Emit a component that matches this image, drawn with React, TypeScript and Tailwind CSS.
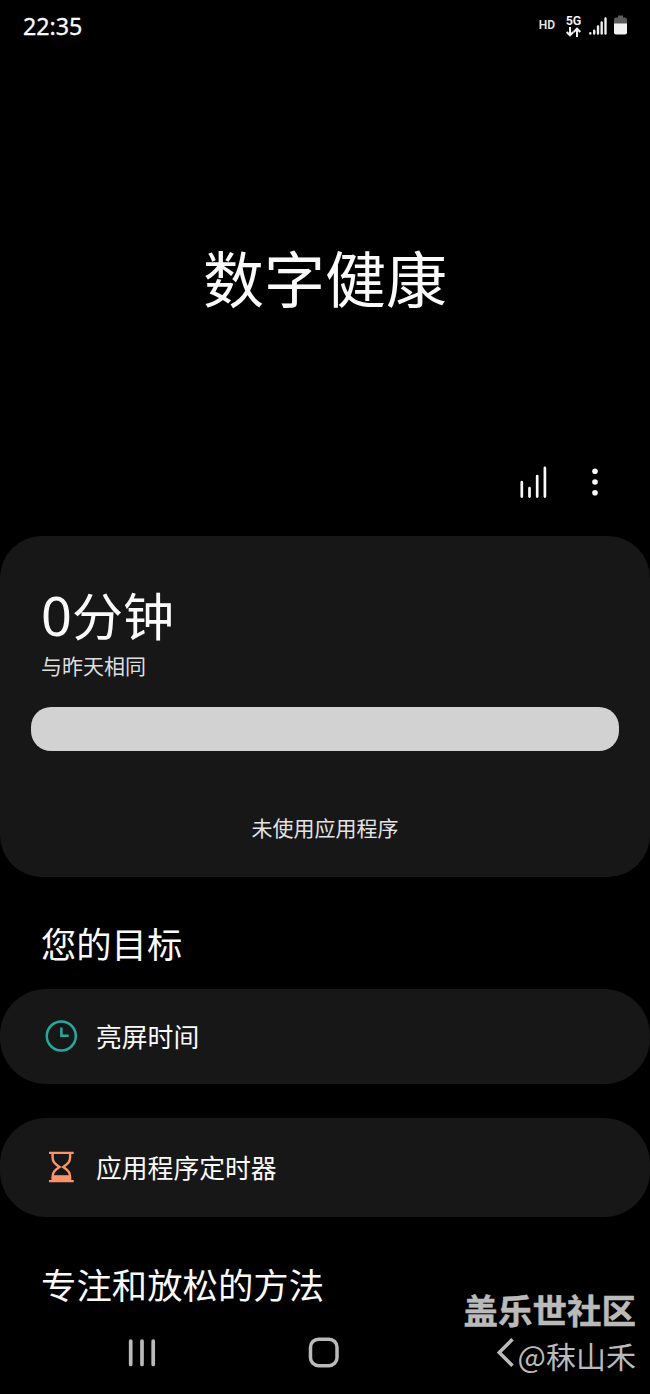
import type { ReactNode } from "react";

function StatusBar() {
  return (
    <header className="flex h-[52px] shrink-0 items-center justify-between pl-[23px] pr-[23px]">
      <span className="font-['Noto_Sans'] text-[23.200px] leading-[52px] font-normal [-webkit-text-stroke:0.3px_#fafafa]">22:35</span>
      <div className="flex h-[52px] items-center">
        <span className="mr-[10px] font-['Roboto'] text-[12px] leading-[12px] mb-[3px] font-semibold text-neutral-200">HD</span>
        <div className="mr-[7px] mb-px flex w-[17px] flex-col items-center">
          <span className="font-['Roboto'] text-[12.500px] leading-[11px] font-semibold">5G</span>
          <svg className="mt-px h-[10px] w-[15px]" viewBox="0 0 15 10" fill="none" stroke="#f2f2f2" strokeWidth="2">
            <path d="M4 0v8M.7 5 4 8.300l3.300-3.300M11 10V2M7.700 5 11 1.700l3.300 3.300" />
          </svg>
        </div>
        <svg className="mr-[7px] h-[18px] w-[18px]" viewBox="0 0 18 18" stroke="#eee" strokeWidth="2.400" strokeLinecap="round">
          <path d="M1.300 16.500v-.4M5.200 16.500v-2.700M9 16.500V9.500M12.700 16.500V5.500M16.500 16.500V1.500" />
        </svg>
        <svg className="mb-[3px] h-[20px] w-[13px]" viewBox="0 0 13 20">
          <path d="M4 .5h5v2h2a2 2 0 0 1 2 2V9H0V4.500a2 2 0 0 1 2-2h2z" fill="#5b5b5b" />
          <path d="M0 8.500h13v9a2 2 0 0 1-2 2H2a2 2 0 0 1-2-2z" fill="#f2f2f2" />
        </svg>
      </div>
    </header>
  );
}

function Toolbar() {
  return (
    <div className="flex h-[34px] shrink-0 items-center justify-end pr-[50px]">
      <svg className="mr-[42px] h-[32px] w-[28px]" viewBox="0 0 28 32" stroke="#fafafa" strokeWidth="2.700" strokeLinecap="round">
        <path d="M1.800 16.200v14.400M9.500 22.200v8.400M17.200 10v20.600M24.900 1.900v28.700" />
      </svg>
      <svg className="h-[30px] w-[10px]" viewBox="0 0 10 30" fill="#fafafa">
        <circle cx="5" cy="4.200" r="2.800" />
        <circle cx="5" cy="15" r="2.800" />
        <circle cx="5" cy="25.700" r="2.800" />
      </svg>
    </div>
  );
}

function UsageCard() {
  return (
    <section className="flex h-[341px] shrink-0 flex-col rounded-[42px] bg-[#171717]">
      <h2 className="mt-[48px] ml-[40px] flex h-[60px] items-baseline text-[51px] leading-[60px]">
        <span className="w-[32px] pl-px font-['Noto_Sans'] text-[54px] leading-[40px]">0</span>
        <span>分钟</span>
      </h2>
      <p className="mt-[6px] ml-[41px] text-[21px] leading-[30px] text-[#dedede]">与昨天相同</p>
      <div className="mx-[31px] mt-[27px] h-[44px] rounded-[20px] bg-[#d2d2d2]" />
      <p className="mt-[61px] text-center text-[21px] leading-[30px] text-[#e4e4e4]">未使用应用程序</p>
    </section>
  );
}

function ClockIcon() {
  return (
    <svg className="h-[32px] w-[32px]" viewBox="0 0 32 32" fill="none" stroke="#28a79d" strokeWidth="2.500">
      <circle cx="16.300" cy="16" r="14.500" />
      <path d="M16.400 7.500v8.300h7.300" />
    </svg>
  );
}

function HourglassIcon() {
  return (
    <svg className="h-[32px] w-[32px]" viewBox="0 0 32 32" fill="none" stroke="#fb9468" strokeWidth="2.400">
      <path d="M4 1.900h24.700M4 30.100h24.700" />
      <path d="M7.600 2v4.500c0 4.500 2.500 6.500 6.900 9.500-4.400 3-6.900 5-6.900 9.500V30M25.100 2v4.500c0 4.500-2.500 6.500-6.900 9.500 4.400 3 6.900 5 6.900 9.500V30" />
      <path d="M7.500 24.200h17.700V30H7.500z" fill="#fb9468" stroke="none" />
    </svg>
  );
}

function GoalRow({ icon, label, size }: { icon: ReactNode; label: string; size: string }) {
  return (
    <div className={`flex shrink-0 items-center bg-[#171717] pb-[2px] pl-[45px] ${size}`}>
      {icon}
      <span className="ml-[19px] text-[25.800px] leading-[36px] text-neutral-50">{label}</span>
    </div>
  );
}

function NavigationBar() {
  return (
    <nav className="flex h-[32px] shrink-0 items-center pl-[128px]">
      <svg className="h-[30px] w-[28px]" viewBox="0 0 28 30" stroke="#bababa" strokeWidth="3.700" strokeLinecap="round">
        <path d="M2.700 3v23.500M14 3v23.500M25.200 3v23.500" />
      </svg>
      <svg className="ml-[152px] h-[32px] w-[32px]" viewBox="0 0 32 32" fill="none" stroke="#bababa" strokeWidth="3.500">
        <rect x="2.500" y="2.200" width="26.500" height="26.500" rx="8" />
      </svg>
      <svg className="ml-[157px] h-[30px] w-[17px]" viewBox="0 0 17 30" fill="none" stroke="#bababa" strokeWidth="3.600">
        <path d="M15.500 1.200 2.200 14.500 15.500 27.800" />
      </svg>
    </nav>
  );
}

export default function App() {
  return (
    <main className="relative flex h-[1394px] w-[650px] flex-col overflow-hidden bg-black font-['Noto_Sans_CJK_SC',sans-serif] text-[#fafafa]">
      <StatusBar />
      <h1 className="mt-[187px] mb-[150px] shrink-0 text-center text-[61px] leading-[76px]">数字健康</h1>
      <Toolbar />
      <div className="mt-[37px] flex shrink-0 flex-col">
        <UsageCard />
      </div>
      <h3 className="mt-[41px] ml-[41px] shrink-0 text-[35.300px] leading-[50px]">您的目标</h3>
      <div className="mt-[21px] flex shrink-0 flex-col gap-[34px]">
        <GoalRow icon={<ClockIcon />} label="亮屏时间" size="h-[95px] rounded-[46px]" />
        <GoalRow icon={<HourglassIcon />} label="应用程序定时器" size="h-[99px] rounded-[46px]" />
      </div>
      <h3 className="mt-[42px] mb-[28px] ml-[41px] shrink-0 text-[35.400px] leading-[50px]">专注和放松的方法</h3>
      <NavigationBar />
      <div className="absolute right-[14px] bottom-[16px] flex flex-col items-end text-[#bababa]">
        <span className="text-[34.500px] leading-[46px] font-bold [-webkit-text-stroke:0.5px_#bababa]">盖乐世社区</span>
        <span className="text-[30px] leading-[46px]">@秣山禾</span>
      </div>
    </main>
  );
}
